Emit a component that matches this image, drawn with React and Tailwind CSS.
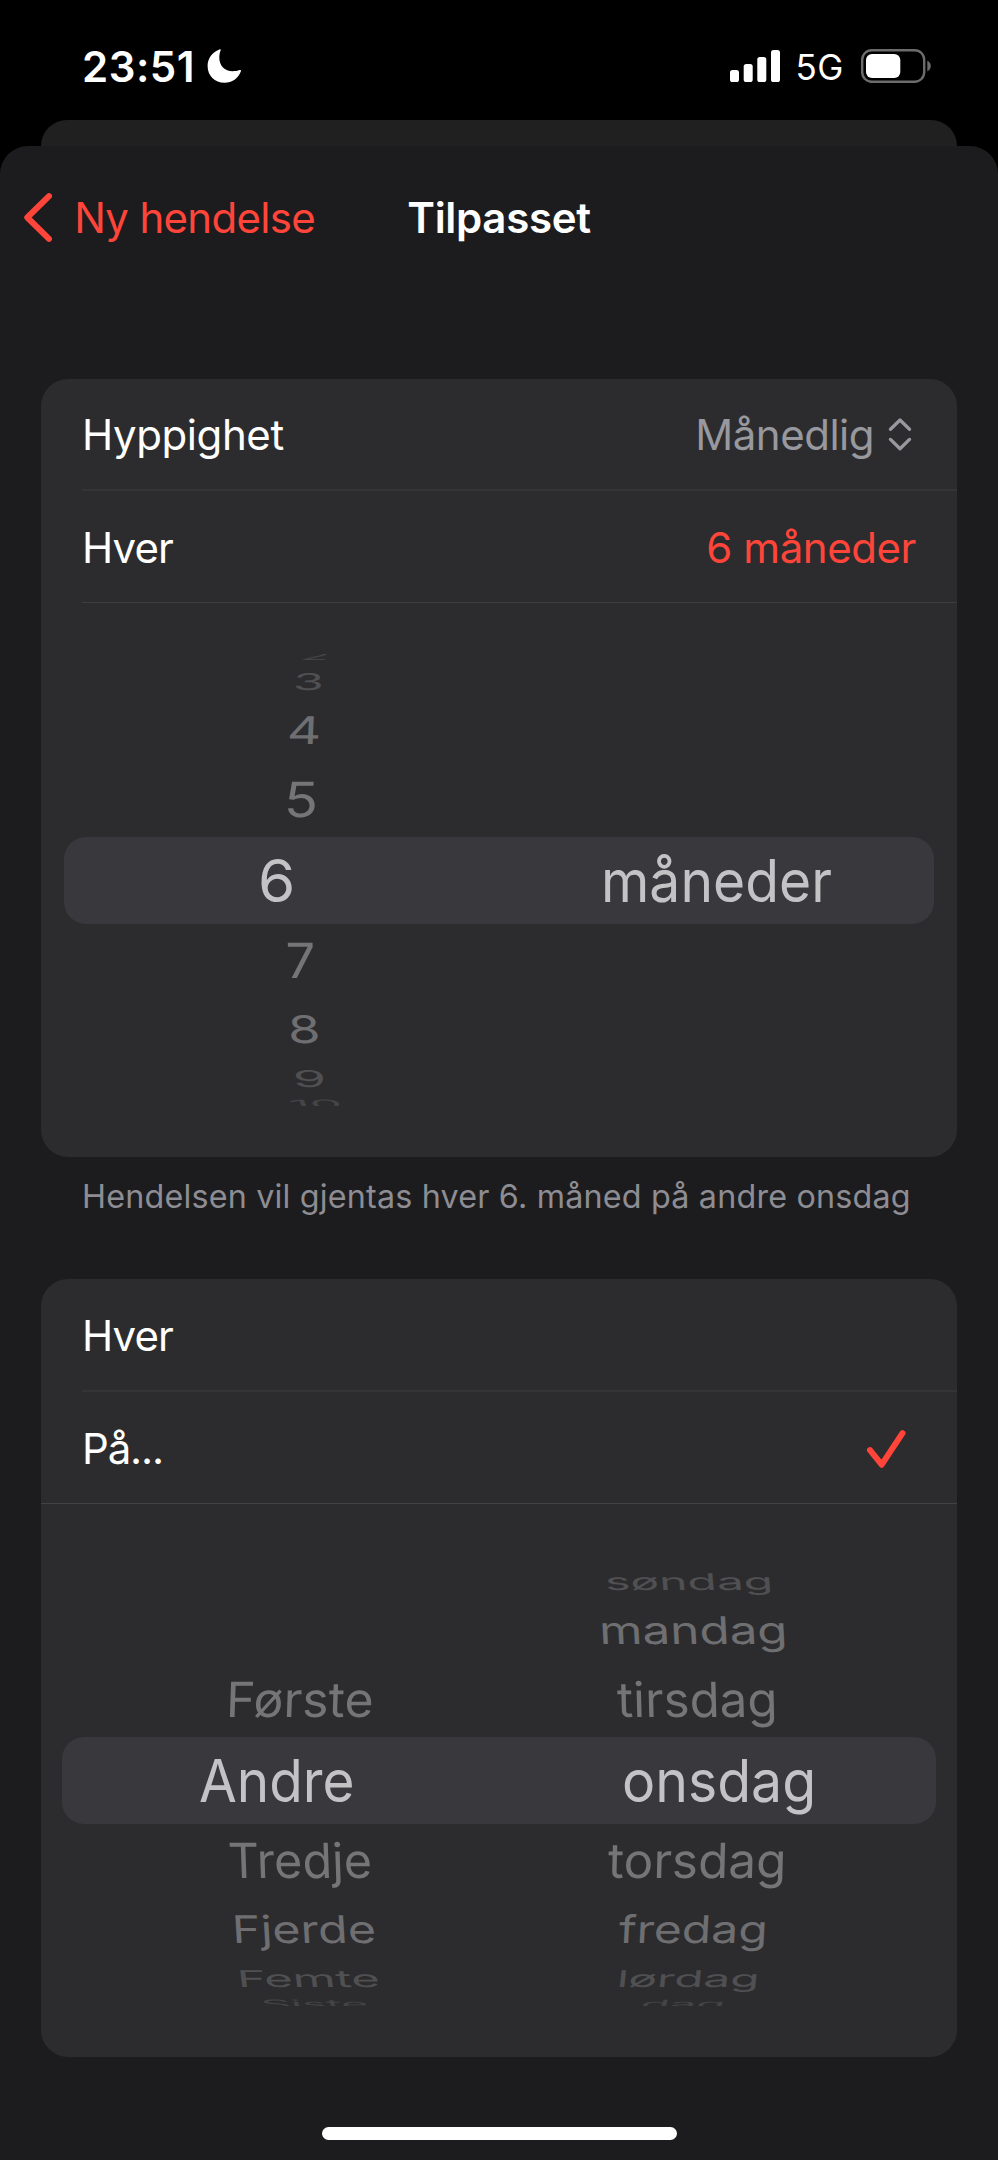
const ROW_HEIGHT = {
  "-4": "h-[9.7px] overflow-hidden",
  "-3": "h-[35.8px]",
  "-2": "h-[63px]",
  "-1": "h-[74.2px]",
  0: "h-[86.6px] text-[59px] text-[#c3c3c6]",
  1: "h-[74.2px]",
  2: "h-[63px] pt-px",
  3: "h-[35.8px]",
  4: "h-[9.7px] overflow-hidden",
};

const ROW_TONE = ["", "text-[#757577]", "text-[#6f6f71]", "text-[#505052]", "text-[#444446]"];

// Vertical squash of a row, by its distance from the middle of the wheel.
const SQUASH = [1, 0.93, 0.73, 0.445, 0.22];

// The outermost rows slide partly past the edge of the wheel.
const slide = (offset) => (Math.abs(offset) === 4 ? Math.sign(offset) * 2.6 : 0);

// Each item: row offset from the selection, label, indent, horizontal scale, tilt in degrees.
const NUMBERS = [
  [-4, "2", 260, 0.904, -24],
  [-3, "3", 251.8, 0.963, -4],
  [-2, "4", 246, 1.021, -2.5],
  [-1, "5", 243, 1.08, -2],
  [0, "6", 217.3, 1.02, 0],
  [1, "7", 244.6, 1.012, 2],
  [2, "8", 247.4, 1.011, 2.5],
  [3, "9", 251.8, 1.026, 4],
  [4, "10", 247.7, 0.983, 20],
];

const UNITS = [[0, "måneder", 102.4, 0.936, 0]];

const ORDINALS = [
  [-1, "Første", 185.4, 0.961, -2],
  [0, "Andre", 158, 0.93, 0],
  [1, "Tredje", 187.2, 0.933, 2],
  [2, "Fjerde", 190.6, 0.931, 3.5],
  [3, "Femte", 195.8, 0.943, 7],
  [4, "Siste", 220.2, 0.89, 20],
];

const WEEKDAYS = [
  [-3, "søndag", 106.1, 0.922, 5],
  [-2, "mandag", 100.4, 0.95, 3],
  [-1, "tirsdag", 118, 0.946, 1.5],
  [0, "onsdag", 123.3, 0.939, 0],
  [1, "torsdag", 108.6, 0.951, -1.5],
  [2, "fredag", 120.2, 0.923, -3],
  [3, "lørdag", 117.9, 0.918, -6],
  [4, "dag", 141.9, 0.91, -18],
];

function WheelColumn({ items }) {
  return (
    <div className="flex w-1/2 flex-col overflow-hidden text-[52px]">
      {[-4, -3, -2, -1, 0, 1, 2, 3, 4].map((offset) => {
        const item = items.find((entry) => entry[0] === offset);
        const distance = Math.abs(offset);
        return (
          <div key={offset} className={`flex shrink-0 items-center leading-none whitespace-pre ${ROW_HEIGHT[offset]} ${ROW_TONE[distance]}`}>
            {item && (
              <span
                className="origin-left"
                style={{
                  marginLeft: item[2],
                  transform: `translateY(${slide(offset)}px) skewX(${item[4]}deg) scale(${item[3]}, ${SQUASH[distance]})`,
                }}
              >
                {item[1]}
              </span>
            )}
          </div>
        );
      })}
    </div>
  );
}

function Wheel({ left, right, band }) {
  return (
    <div className="relative h-[452px]">
      <div className={`absolute top-[182.600px] h-[86.6px] rounded-[22px] bg-[#39393d] ${band}`} />
      <div className="relative flex h-full">
        <WheelColumn items={left} />
        <WheelColumn items={right} />
      </div>
    </div>
  );
}

function StatusBar() {
  return (
    <div className="flex h-[120px] items-center pt-[12.6px] pr-[67px] pl-[82px] text-white">
      <span className="pt-px text-[42px] leading-none font-semibold tracking-[0.5px]">23:51</span>
      <svg className="ml-[12px] h-[35px] w-[35px]" viewBox="0 0 35 35" fill="currentColor">
        <path d="M12.4 0.5C13.3 0.1 14 0.7 13.6 1.600C12.8 3.600 12.3 6 12.3 8.600C12.3 16.800 17.600 22.300 25.700 22.300C28.400 22.300 30.600 21.900 32.500 21.100C33.500 20.700 34.300 21.300 33.900 22.300C31.400 29.300 25.100 33.800 17.500 33.800C7.600 33.800 0.600 26.700 0.600 17C0.600 9.700 5 3.300 12.400 0.500Z" />
      </svg>
      <svg className="ml-auto h-[32px] w-[50px]" viewBox="0 0 50 32" fill="currentColor">
        <rect x="0" y="20" width="9" height="12" rx="2.6" />
        <rect x="13.700" y="14" width="9" height="18" rx="2.6" />
        <rect x="27.300" y="7" width="9" height="25" rx="2.6" />
        <rect x="41" y="0" width="9" height="32" rx="2.6" />
      </svg>
      <span className="ml-[15.500px] w-[51px] pt-[3px] text-[35px] leading-none font-normal tracking-[0.5px]">5G</span>
      <svg className="ml-[14.500px] h-[34px] w-[70px]" viewBox="0 0 70 34">
        <rect x="1.200" y="1.200" width="62" height="31.600" rx="9.500" fill="none" stroke="#6c6c6c" strokeWidth="2.400" />
        <rect x="5" y="5" width="34.300" height="24" rx="6" fill="white" />
        <path d="M66.300 11.800C68.300 12.600 69.800 14.500 69.800 17C69.800 19.500 68.300 21.400 66.300 22.200Z" fill="#6c6c6c" />
      </svg>
    </div>
  );
}

export default function App() {
  return (
    <div className="flex h-[2160px] w-[998px] flex-col overflow-hidden bg-black font-['Inter',sans-serif] text-[42px] text-white">
      <StatusBar />
      <div className="mx-[41px] h-[26px] shrink-0 overflow-hidden">
        <div className="h-[60px] rounded-t-[26px] bg-[#202021]" />
      </div>
      <main className="flex flex-1 flex-col rounded-t-[28px] bg-[#1c1c1e]">
        <header className="grid h-[143px] shrink-0 grid-cols-3 items-center">
          <div className="flex items-center pl-[23.500px] text-[#ff453a]">
            <svg className="h-[49px] w-[28px] shrink-0" viewBox="0 0 28 49" fill="none" stroke="currentColor" strokeWidth="6" strokeLinecap="round" strokeLinejoin="round">
              <path d="M25 3.200L3.300 24.500L25 45.800" />
            </svg>
            <span className="ml-[22.700px] leading-none tracking-[-0.69px] whitespace-nowrap">Ny hendelse</span>
          </div>
          <h1 className="text-center leading-none font-semibold tracking-[-0.3px]">Tilpasset</h1>
        </header>

        <section className="mx-[41px] mt-[90px] flex h-[778px] shrink-0 flex-col overflow-hidden rounded-[27px] bg-[#2c2c2e]">
          <div className="flex h-[110px] shrink-0 items-center pt-[2px] pr-[45px] pl-[41px] leading-none">
            <span className="tracking-[-0.41px]">Hyppighet</span>
            <span className="ml-auto tracking-[-0.5px] text-[#98989f]">Månedlig</span>
            <svg className="mb-[2px] ml-[14px] h-[33px] w-[24px]" viewBox="0 0 24 33" fill="none" stroke="#98989f" strokeWidth="3.300" strokeLinecap="round" strokeLinejoin="round">
              <path d="M2.500 11.300L12 2L21.500 11.300M2.500 21.400L12 30.700L21.500 21.400" />
            </svg>
          </div>
          <div className="ml-[41px] h-[2px] shrink-0 bg-[#343437]" />
          <div className="flex h-[111px] shrink-0 items-center pr-[41px] pl-[41px] pt-[3px] leading-none">
            <span className="tracking-[-0.9px]">Hver</span>
            <span className="ml-auto tracking-[-0.43px] text-[#ff453a]">6 måneder</span>
          </div>
          <div className="ml-[41px] h-px shrink-0 bg-[#3d3d40]" />
          <div className="pt-[51.400px]">
            <Wheel left={NUMBERS} right={UNITS} band="inset-x-[23px]" />
          </div>
        </section>

        <p className="ml-[82px] flex h-[79px] shrink-0 items-center pt-[2px] text-[32.3px] leading-none tracking-[0.18px] whitespace-nowrap text-[#8d8d93]">
          Hendelsen vil gjentas hver 6. måned på andre onsdag
        </p>

        <section className="mx-[41px] mt-[43px] flex h-[778px] shrink-0 flex-col overflow-hidden rounded-[27px] bg-[#2c2c2e]">
          <div className="flex h-[111px] shrink-0 items-center pt-[3px] pl-[41px] leading-none">
            <span className="tracking-[-0.9px]">Hver</span>
          </div>
          <div className="ml-[41px] h-[2px] shrink-0 bg-[#343437]" />
          <div className="flex h-[111px] shrink-0 items-center pt-[2px] pr-[51.500px] pl-[41px] leading-none">
            <span className="tracking-[-1.15px]">På...</span>
            <svg className="ml-auto h-[38px] w-[40px]" viewBox="0 0 40 38" fill="none" stroke="#ff453a" strokeWidth="6" strokeLinecap="round" strokeLinejoin="round">
              <path d="M4 20.200L15.700 34.700L36.500 3.200" />
            </svg>
          </div>
          <div className="h-px shrink-0 bg-[#424245]" />
          <div className="pt-[50.400px]">
            <Wheel left={ORDINALS} right={WEEKDAYS} band="inset-x-[21px]" />
          </div>
        </section>

        <div className="mx-auto mt-auto mb-[20.500px] h-[13px] w-[355px] shrink-0 rounded-full bg-white" />
      </main>
    </div>
  );
}
